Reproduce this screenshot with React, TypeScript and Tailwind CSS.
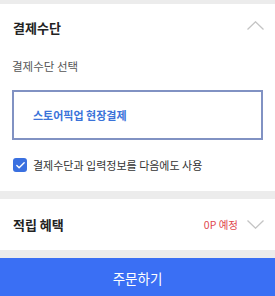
import { Check } from 'lucide-react';

const font = { fontFamily: '"Noto Sans CJK KR", "Noto Sans", sans-serif' };

function Chevron({ up }: { up?: boolean }) {
  return (
    <svg width="17" height="9" viewBox="0 0 17 9" fill="none" className="text-[#c4c4c4]">
      <polyline
        points={up ? '0.5,8.5 8.5,0.8 16.5,8.5' : '0.5,0.5 8.5,8.2 16.5,0.5'}
        stroke="currentColor"
        strokeWidth="1.3"
      />
    </svg>
  );
}

export default function App() {
  return (
    <div className="w-[275px] h-[296px] flex flex-col bg-[#ececec] overflow-hidden" style={font}>
      {/* Payment method section */}
      <div className="mt-[4px] bg-white px-[12px] pt-[11px] pb-[17px]">
        <div className="flex items-center justify-between h-[26px]">
          <h2 className="text-[13px] font-bold text-[#222] ml-[1px]">결제수단</h2>
          <div className="mr-[-1px] mb-[6px]">
            <Chevron up />
          </div>
        </div>
        <p className="mt-[16px] text-[11.5px] text-[#555] leading-[18px]">결제수단 선택</p>
        <div className="mt-[15px] h-[50px] border-2 border-[#8192c3] flex items-center px-[19px]">
          <span className="text-[11px] font-bold text-[#3b73d9]">스토어픽업 현장결제</span>
        </div>
        <label className="mt-[16px] h-[18px] flex items-center gap-[6px]">
          <span className="w-[14px] h-[14px] rounded-[3px] bg-[#3a70e0] flex items-center justify-center ml-[1px]">
            <Check className="w-[11px] h-[11px] text-white" strokeWidth={3} />
          </span>
          <span className="text-[11px] text-[#333]">결제수단과 입력정보를 다음에도 사용</span>
        </label>
      </div>

      {/* Reward section */}
      <div className="mt-[8px] bg-white px-[12px] h-[51px] flex items-center justify-between">
        <h2 className="text-[13px] font-bold text-[#222] ml-[1px]">적립 혜택</h2>
        <div className="flex items-center gap-[9px] mr-[-1px]">
          <span className="text-[10.5px] text-[#e04a4f]">0P 예정</span>
          <Chevron />
        </div>
      </div>

      {/* Order button */}
      <button className="mt-[8px] flex-1 bg-[#3a6ff4] text-white text-[13.5px] flex items-center justify-center pt-[2px]">
        주문하기
      </button>
    </div>
  );
}
